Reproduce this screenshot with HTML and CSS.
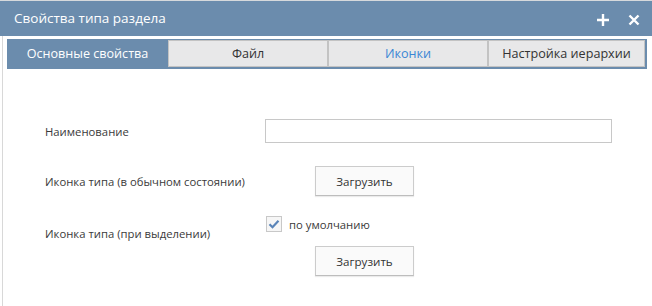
FILE: index.html
```html
<!DOCTYPE html>
<html lang="ru">

<head>
    <meta charset="UTF-8">
    <title>Свойства типа раздела</title>
    <link rel="stylesheet" href="styles.css">
</head>

<body>
    <div class="dialog">
        <div class="titlebar">
            <span class="title">Свойства типа раздела</span>
            <div class="tools">
                <svg class="tool" width="14" height="14" viewBox="0 0 14 14">
                    <path d="M7 1v12M1 7h12" stroke="#fff" stroke-width="2.4" fill="none" />
                </svg>
                <svg class="tool" width="12" height="12" viewBox="0 0 12 12">
                    <path d="M1.5 1.5l9 9M10.5 1.5l-9 9" stroke="#fff" stroke-width="2.4" fill="none" />
                </svg>
            </div>
        </div>
        <div class="body">
            <div class="tabs">
                <div class="tab active">Основные свойства</div>
                <div class="tab">Файл</div>
                <div class="tab link">Иконки</div>
                <div class="tab">Настройка иерархии</div>
            </div>
            <div class="form">
                <div class="row row-name">
                    <div class="label">Наименование</div>
                    <input class="field" type="text">
                </div>
                <div class="row row-icon">
                    <div class="label">Иконка типа (в обычном состоянии)</div>
                    <button class="btn">Загрузить</button>
                </div>
                <div class="row row-select">
                    <div class="label">Иконка типа (при выделении)</div>
                    <div class="control">
                        <label class="check">
                            <span class="box">
                                <svg width="12" height="10" viewBox="0 0 12 10">
                                    <path d="M1.5 5.2l3 3 6-6.5" stroke="#5a84b8" stroke-width="2.2" fill="none" />
                                </svg>
                            </span>
                            по умолчанию
                        </label>
                        <button class="btn">Загрузить</button>
                    </div>
                </div>
            </div>
        </div>
    </div>
</body>

</html>
```

FILE: styles.css
```css
* {
    margin: 0;
    padding: 0;
    box-sizing: border-box;
}

body {
    width: 652px;
    height: 306px;
    overflow: hidden;
    background: #ffffff;
    font-family: "Open Sans", sans-serif;
    color: #333333;
}

.titlebar {
    height: 36px;
    border-top: 1px solid #d6d9dc;
    background-color: #6b8cad;
    display: flex;
    align-items: center;
    justify-content: space-between;
    padding: 0 12px 0 14px;
}

.title {
    color: #ffffff;
    font-size: 13.5px;
    margin-top: -1px;
}

.tools {
    display: flex;
    align-items: center;
    gap: 18px;
    margin-top: 3px;
}

.tool {
    display: block;
}

.body {
    margin-left: 2px;
    height: 270px;
    border-left: 1px solid #d8d8d8;
    padding: 3px 5px 0 4px;
}

.tabs {
    display: grid;
    grid-template-columns: 161px 160px 160px 157px;
    height: 30px;
    padding: 1px 2px 2px 0;
    background-color: #6b8cad;
}

.tab {
    display: flex;
    align-items: center;
    justify-content: center;
    font-size: 12.6px;
    background-color: #e8e8e9;
    border: 1px solid #c3c3c3;
    color: #333333;
}

.tab.active {
    background-color: transparent;
    border-color: transparent;
    color: #ffffff;
}

.tab.link {
    color: #3a86d4;
}

.form {
    padding: 50px 0 0 38px;
    font-size: 11.3px;
    color: #3a3a3a;
}

.row {
    display: flex;
    align-items: center;
}

.label {
    width: 220px;
}

.row-name {
    height: 24px;
    margin-bottom: 23px;
}

.field {
    width: 347px;
    height: 24px;
    border: 1px solid #c8c8c8;
    outline: none;
}

.row-icon {
    height: 30px;
    margin-bottom: 20px;
}

.btn {
    width: 99px;
    height: 30px;
    margin-left: 50px;
    border: 1px solid #cccccc;
    border-bottom-color: #bdbdbd;
    background-color: #fafafa;
    box-shadow: 0 1px 1px rgba(0, 0, 0, 0.08);
    font-family: "Open Sans", sans-serif;
    font-size: 11.6px;
    color: #333333;
}

.row-select {
    align-items: flex-start;
}

.row-select .label {
    padding-top: 10px;
}

.check {
    display: flex;
    align-items: center;
    gap: 7px;
    height: 16px;
    margin: 0 0 14px 1px;
}

.box {
    width: 16px;
    height: 16px;
    border: 1px solid #c8c8c8;
    background-color: #f6f6f6;
    display: flex;
    align-items: center;
    justify-content: center;
}

.box svg {
    display: block;
}
```
